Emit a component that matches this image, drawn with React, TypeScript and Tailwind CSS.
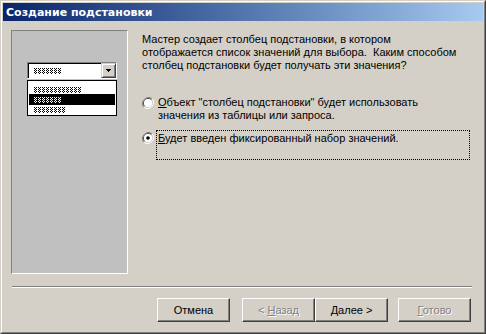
import type { ReactNode } from "react";

const ui = "font-['Liberation_Sans',Arial,sans-serif] text-[11px] leading-[13px] text-black";

function Dots({ n, inverse = false }: { n: number; inverse?: boolean }) {
  const c = inverse ? "#fff" : "#000";
  const id = inverse ? "dots-w" : "dots-b";
  return (
    <svg width={n * 4} height={6} className="block">
      <defs>
        <pattern id={id} width="4" height="2" patternUnits="userSpaceOnUse">
          <rect x="0" y="0" width="1" height="1" fill={c} />
          <rect x="2" y="0" width="1" height="1" fill={c} />
          <rect x="1" y="1" width="1" height="1" fill={c} />
        </pattern>
      </defs>
      <rect width={n * 4} height={6} fill={`url(#${id})`} />
    </svg>
  );
}

function Radio({ checked }: { checked?: boolean }) {
  return (
    <svg width="12" height="12" viewBox="0 0 12 12" className="block shrink-0">
      <path d="M10.2 1.8A6 6 0 0 0 1.8 10.2" fill="none" stroke="#808080" strokeWidth="1" />
      <path d="M9.5 2.5A5 5 0 0 0 2.5 9.5" fill="none" stroke="#404040" strokeWidth="1" />
      <path d="M1.8 10.2A6 6 0 0 0 10.2 1.8" fill="none" stroke="#fff" strokeWidth="1" />
      <path d="M2.5 9.5A5 5 0 0 0 9.5 2.5" fill="none" stroke="#d4d0c8" strokeWidth="1" />
      <circle cx="6" cy="6" r="4" fill="#fff" />
      {checked && <circle cx="6" cy="6" r="1.8" fill="#000" />}
    </svg>
  );
}

function Button({ children, disabled }: { children: ReactNode; disabled?: boolean }) {
  return (
    <div
      className={`flex h-[24px] w-[73px] items-center justify-center border border-t-white border-l-white border-r-[#404040] border-b-[#404040] shadow-[inset_-1px_-1px_#808080] ${
        disabled ? "text-[#808080] [text-shadow:1px_1px_#fff]" : "text-black"
      }`}
    >
      <span className="whitespace-pre">{children}</span>
    </div>
  );
}

export default function App() {
  return (
    <div className={`${ui} h-[334px] w-[486px] border border-t-[#d4d0c8] border-l-[#d4d0c8] border-r-[#404040] border-b-[#404040] bg-[#d4d0c8]`}>
      <div className="flex h-full flex-col border border-t-white border-l-white border-r-[#808080] border-b-[#808080] p-px">
        <div className="flex h-[18px] shrink-0 items-center bg-linear-to-r from-[#0a246a] to-[#a6caf0] pl-[3px] font-['DejaVu_Sans',sans-serif] text-[11px] font-bold text-white">
          Создание подстановки
        </div>

        <div className="flex pl-[8px] pt-[9px]">
          <div className="h-[244px] w-[117px] shrink-0 border border-t-[#808080] border-l-[#808080] border-r-white border-b-white bg-[#c0c0c0] pl-[15px] pt-[31px]">
            <div className="flex h-[17px] w-[90px] items-center border border-t-[#808080] border-l-[#808080] border-r-white border-b-white bg-white">
              <div className="flex h-full flex-1 items-center border-t border-l border-t-black border-l-black pl-[5px]">
                <Dots n={7} />
              </div>
              <div className="flex h-full w-[15px] items-center justify-center border border-t-[#d4d0c8] border-l-[#d4d0c8] border-r-[#404040] border-b-[#404040] bg-[#d4d0c8] shadow-[inset_1px_1px_#fff,inset_-1px_-1px_#808080]">
                <svg width="5" height="3" viewBox="0 0 5 3" className="block">
                  <path d="M0 0h5v1H0zM1 1h3v1H1zM2 2h1v1H2z" fill="#000" />
                </svg>
              </div>
            </div>
            <div className="mt-px flex h-[36px] w-[90px] flex-col border border-black bg-white px-[4px] pt-[4px]">
              <div className="flex h-[9px] items-center pl-[2px]">
                <Dots n={12} />
              </div>
              <div className="-mx-[3px] flex h-[11px] items-center bg-black pl-[5px]">
                <Dots n={7} inverse />
              </div>
              <div className="flex h-[10px] items-center pl-[2px]">
                <Dots n={8} />
              </div>
            </div>
          </div>

          <div className="ml-[14px] flex flex-col pt-[3px]">
            <p className="whitespace-pre">
              {"Мастер создает столбец подстановки, в котором\nотображается список значений для выбора.  Каким способом\nстолбец подстановки будет получать эти значения?"}
            </p>

            <div className="mt-[25px] flex items-start">
              <Radio />
              <div className="ml-[3px] -mt-px pl-px">
                <span className="underline">О</span>бъект "столбец подстановки" будет использовать
                <br />
                значения из таблицы или запроса.
              </div>
            </div>

            <div className="mt-[8px] flex items-start">
              <div className="pt-[2px]">
                <Radio checked />
              </div>
              <div className="ml-[2px] h-[30px] w-[314px] border border-dotted border-black pl-px pt-px">
                <span className="underline">Б</span>удет введен фиксированный набор значений.
              </div>
            </div>
          </div>
        </div>

        <div className="ml-[9px] mr-[11px] mt-[12px] h-[2px] border-t border-b border-t-[#808080] border-b-white" />

        <div className="ml-[154px] mt-[10px] flex">
          <Button>Отмена</Button>
          <div className="ml-[12px] flex">
            <Button disabled>
              {"< "}
              <span className="underline">Н</span>
              {"азад"}
            </Button>
            <Button>
              <span className="underline">Д</span>
              {"алее >"}
            </Button>
          </div>
          <div className="ml-[10px]">
            <Button disabled>
              <span className="underline">Г</span>
              {"отово"}
            </Button>
          </div>
        </div>
      </div>
    </div>
  );
}
